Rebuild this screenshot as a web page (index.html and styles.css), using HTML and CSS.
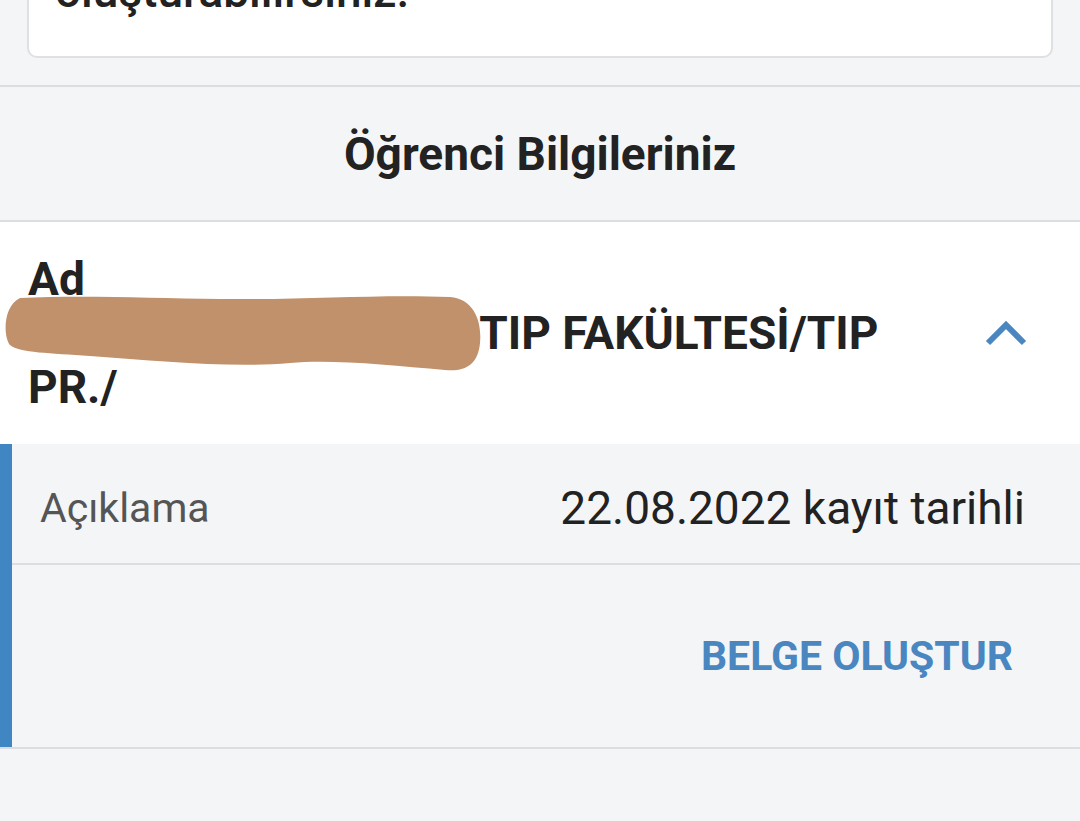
FILE: index.html
```html
<!DOCTYPE html>
<html lang="tr">
<head>
    <meta charset="UTF-8">
    <meta name="viewport" content="width=device-width, initial-scale=1.0">
    <title>Öğrenci Belgesi</title>
    <link rel="stylesheet" href="styles.css">
</head>
<body>
    <div class="page">
        <div class="notice-wrap">
            <div class="notice">oluşturabilirsiniz.</div>
        </div>
        <div class="section-title">Öğrenci Bilgileriniz</div>
        <div class="item">
            <div class="item-title">Ad<br><span class="hidden-name">AD SOYAD</span> TIP FAKÜLTESİ/TIP<br>PR./</div>
            <svg class="chevron" width="44" height="28" viewBox="0 0 44 28">
                <polyline points="4,24 22,6 40,24" fill="none" stroke="#4a87c1" stroke-width="6"/>
            </svg>
            <!-- karalama -->
            <svg class="scribble" width="490" height="90" viewBox="0 0 490 90">
                <path d="M 20,3 C 80,0 150,3 220,4 C 300,5 380,-1 450,2 C 475,4 482,28 480,48 C 478,70 465,77 445,75 C 390,70 330,64 290,68 C 230,73 160,66 90,61 C 50,58 20,58 10,50 C 3,41 3,11 20,3 Z" fill="#c0916a"/>
            </svg>
        </div>
        <div class="detail">
            <div class="detail-inner">
                <div class="detail-row">
                    <span class="label">Açıklama</span>
                    <span class="value">22.08.2022 kayıt tarihli</span>
                </div>
                <div class="actions">
                    <a href="javascript:;" class="btn">BELGE OLUŞTUR</a>
                </div>
            </div>
        </div>
    </div>
</body>
</html>
```

FILE: styles.css
```css
* {
    margin: 0;
    padding: 0;
    box-sizing: border-box;
}
a {
    text-decoration: none;
}
body {
    background: #f4f5f7;
    font-family: Roboto, "Liberation Sans", sans-serif;
    color: #222;
}
.page {
    height: 821px;
    overflow: hidden;
}
.notice-wrap {
    padding: 0 27px 27px 27px;
}
.notice {
    margin-top: -36px;
    background: #fff;
    border: 2px solid #dfe0e3;
    border-top: none;
    border-radius: 0 0 10px 10px;
    padding: 0 26px 38px 26px;
    font-size: 46px;
    font-weight: 500;
    line-height: 54px;
    color: #222;
}
.section-title {
    border-top: 2px solid #dcdde0;
    border-bottom: 2px solid #dcdde0;
    height: 137px;
    display: flex;
    align-items: center;
    justify-content: center;
    font-size: 46px;
    font-weight: 700;
    color: #222;
}
.item {
    position: relative;
    background: #fff;
    height: 222px;
    padding: 0 52px 0 28px;
    display: flex;
    align-items: center;
    justify-content: space-between;
}
.item-title {
    font-size: 46px;
    font-weight: 700;
    line-height: 54px;
    color: #222;
}
.hidden-name {
    display: inline-block;
    width: 441px;
    white-space: nowrap;
}
.chevron {
    display: block;
}
.scribble {
    position: absolute;
    left: 0;
    top: 73px;
}
.detail {
    border-bottom: 2px solid #dcdde0;
}
.detail-inner {
    border-left: 12px solid #3f86c2;
}
.detail-row {
    height: 121px;
    border-bottom: 2px solid #dcdde0;
    display: flex;
    align-items: center;
    justify-content: space-between;
    padding: 8px 55px 0 28px;
}
.label {
    font-size: 41px;
    color: #555;
}
.value {
    font-size: 46px;
    color: #222;
}
.actions {
    height: 182px;
    display: flex;
    align-items: center;
    justify-content: flex-end;
    padding-right: 67px;
}
.btn {
    font-size: 41px;
    font-weight: 700;
    color: #4a87c1;
}
```
